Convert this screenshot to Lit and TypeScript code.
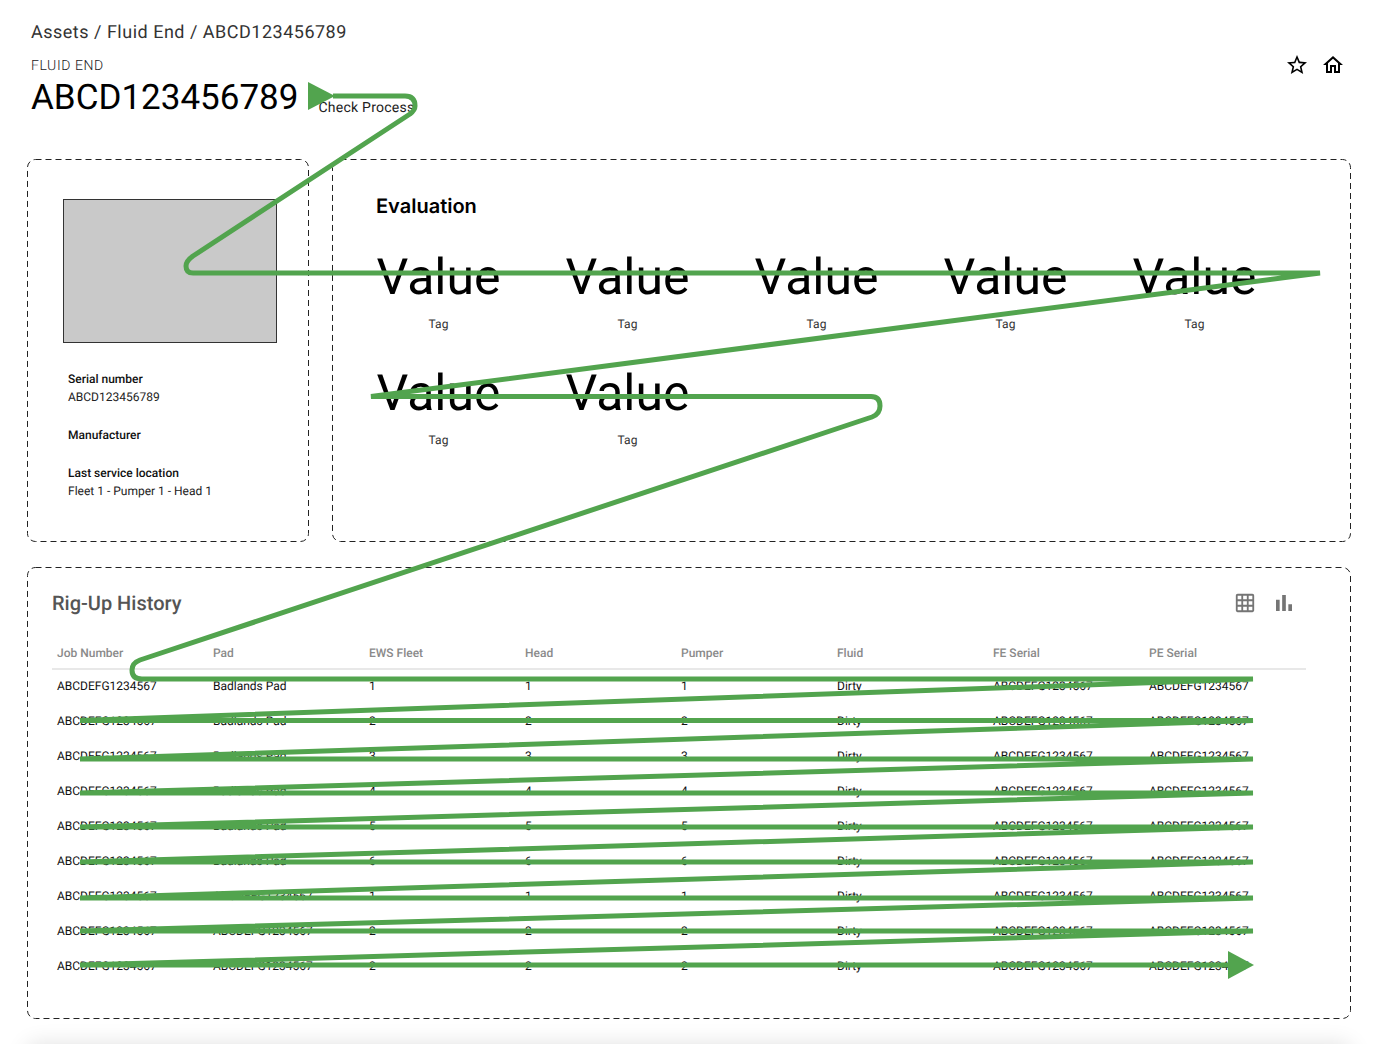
import { LitElement, html, css, svg } from 'lit';
import { customElement } from 'lit/decorators.js';

const COLUMNS = ['Job Number', 'Pad', 'EWS Fleet', 'Head', 'Pumper', 'Fluid', 'FE Serial', 'PE Serial'];
const SERIAL = 'ABCDEFG1234567';
const ROWS = [
  ['Badlands Pad', '1'],
  ['Badlands Pad', '2'],
  ['Badlands Pad', '3'],
  ['Badlands Pad', '4'],
  ['Badlands Pad', '5'],
  ['Badlands Pad', '6'],
  [SERIAL, '1'],
  [SERIAL, '2'],
  [SERIAL, '2'],
];

// the green annotation sweep that sits over the whole page
const ROW_TURNS = [720.5, 759, 793, 827, 862, 898, 931];
const SWEEP =
  'M333 96H405Q415 96 415 106Q415 110 410 114L193 256Q186 261 186 266Q186 273 193 273H1320L371 396.5H871Q880 396.5 880 406Q880 414 872 417L140 660Q132 663 132 670Q132 679 142 679H1253' +
  ROW_TURNS.map((y) => `L80 ${y}H1253`).join('') +
  'L80 965H1232';

const dashed = svg`<svg class="dash" aria-hidden="true"><rect rx="8" ry="8"></rect></svg>`;

@customElement('app-root')
export class AppRoot extends LitElement {
  static styles = css`
    :host {
      display: block;
      position: relative;
      box-sizing: border-box;
      width: 1388px;
      height: 1044px;
      overflow: hidden;
      padding: 22px 37px 0 27px;
      background: #fff;
      font-family: Roboto, 'Liberation Sans', sans-serif;
      text-rendering: geometricPrecision;
      color: #000;
    }
    .crumbs {
      margin-left: 4px;
      font-size: 18px;
      line-height: 22px;
      letter-spacing: 0.5px;
      color: #333;
    }
    .head {
      display: flex;
      justify-content: space-between;
      align-items: flex-start;
      margin-top: 12px;
      padding: 0 6px 0 4px;
    }
    .kind {
      font-size: 14px;
      line-height: 20px;
      font-weight: 300;
      letter-spacing: 0.6px;
      color: #222;
    }
    .title-row {
      display: flex;
      align-items: flex-end;
      gap: 20px;
    }
    h1 {
      margin: 0;
      font-size: 35px;
      line-height: 44px;
      font-weight: 400;
    }
    .check {
      margin-bottom: 2px;
      font-size: 14px;
      line-height: 20px;
      letter-spacing: 0.25px;
      color: #222;
    }
    .actions {
      display: flex;
      gap: 12px;
      margin-top: -3px;
    }
    .actions svg {
      display: block;
      width: 24px;
      height: 24px;
      fill: #000;
    }
    .top {
      display: flex;
      gap: 23px;
      height: 383px;
      margin-top: 39px;
    }
    .card {
      position: relative;
      box-sizing: border-box;
    }
    .dash {
      position: absolute;
      inset: 0;
      width: 100%;
      height: 100%;
      pointer-events: none;
    }
    .dash rect {
      x: 0.5px;
      y: 0.5px;
      width: calc(100% - 1px);
      height: calc(100% - 1px);
      fill: none;
      stroke: #222;
      stroke-width: 1;
      stroke-dasharray: 6 4;
    }
    .asset {
      width: 282px;
      flex: none;
      padding: 40px 0 0 36px;
    }
    .photo {
      box-sizing: border-box;
      width: 214px;
      height: 144px;
      margin-bottom: 27px;
      border: 1px solid #333;
      background: #c9c9c9;
    }
    .fact {
      margin: 0 0 20px 5px;
      font-size: 12px;
      line-height: 18px;
      color: #222;
    }
    .fact b {
      display: block;
      font-weight: 500;
      color: #111;
    }
    .evaluation {
      flex: 1;
      padding: 35px 44px 0;
    }
    h2 {
      margin: 0 0 32px;
      font-family: Inter, Roboto, sans-serif;
      font-size: 20px;
      line-height: 24px;
      font-weight: 600;
    }
    .stats {
      display: flex;
      flex-wrap: wrap;
      column-gap: 64px;
      row-gap: 33px;
    }
    .stat {
      width: 125px;
      text-align: center;
    }
    .value {
      font-size: 50px;
      line-height: 56px;
    }
    .tag {
      margin-top: 9px;
      font-size: 12px;
      line-height: 18px;
      color: #333;
    }
    .history {
      height: 452px;
      margin-top: 25px;
      padding: 24px 45px 0 25px;
    }
    .history-head {
      display: flex;
      justify-content: space-between;
      align-items: center;
      padding-right: 14px;
    }
    h3 {
      margin: 0;
      font-size: 20px;
      line-height: 24px;
      font-weight: 500;
      color: #555;
    }
    .views {
      display: flex;
      align-items: center;
      gap: 20px;
    }
    .views svg {
      display: block;
      fill: #757575;
    }
    .row {
      display: grid;
      grid-template-columns: repeat(8, 156px);
      padding-left: 5px;
      height: 35px;
      align-items: center;
      font-size: 12px;
      color: #111;
    }
    .row.labels {
      box-sizing: border-box;
      height: 34px;
      margin: 21px 0 -2px;
      padding-top: 2px;
      border-bottom: 2px solid #e8e8e8;
      font-weight: 500;
      color: #8a8a8a;
    }
    /* only the soft shadow of this sheet shows, the sheet itself is below the fold */
    .next-sheet {
      height: 40px;
      margin-top: 25px;
      border-radius: 8px;
      background: #f0f0f0;
      box-shadow: 0 0 22px rgba(0, 0, 0, 0.12);
    }
    .sweep {
      position: absolute;
      left: 0;
      top: 0;
      pointer-events: none;
    }
    .sweep path {
      fill: none;
      stroke: #52a44e;
      stroke-width: 5;
      stroke-linejoin: bevel;
    }
    .sweep polygon {
      fill: #52a44e;
    }
  `;

  render() {
    return html`
      <div class="crumbs">Assets / Fluid End / ABCD123456789</div>
      <div class="head">
        <div>
          <div class="kind">FLUID END</div>
          <div class="title-row">
            <h1>ABCD123456789</h1>
            <span class="check">Check Process</span>
          </div>
        </div>
        <div class="actions">
          <svg viewBox="0 0 24 24"><path d="M22 9.24l-7.19-.62L12 2 9.19 8.63 2 9.24l5.46 4.73L5.82 21 12 17.27 18.18 21l-1.63-7.03L22 9.24zM12 15.4l-3.76 2.27 1-4.28-3.32-2.88 4.38-.38L12 6.1l1.71 4.04 4.38.38-3.32 2.88 1 4.28L12 15.4z"></path></svg>
          <svg viewBox="0 0 24 24"><path d="M12 5.69l5 4.5V18h-2v-6H9v6H7v-7.81l5-4.5M12 3L2 12h3v8h6v-6h2v6h6v-8h3L12 3z"></path></svg>
        </div>
      </div>

      <div class="top">
        <section class="card asset">
          ${dashed}
          <div class="photo"></div>
          <div class="fact"><b>Serial number</b>ABCD123456789</div>
          <div class="fact"><b>Manufacturer</b></div>
          <div class="fact"><b>Last service location</b>Fleet 1 - Pumper 1 - Head 1</div>
        </section>
        <section class="card evaluation">
          ${dashed}
          <h2>Evaluation</h2>
          <div class="stats">
            ${[1, 2, 3, 4, 5, 6, 7].map(
              () => html`<div class="stat">
                <div class="value">Value</div>
                <div class="tag">Tag</div>
              </div>`
            )}
          </div>
        </section>
      </div>

      <section class="card history">
        ${dashed}
        <div class="history-head">
          <h3>Rig-Up History</h3>
          <div class="views">
            <svg width="22" height="22" viewBox="0 0 24 24"><path d="M20 2H4c-1.1 0-2 .9-2 2v16c0 1.1.9 2 2 2h16c1.1 0 2-.9 2-2V4c0-1.1-.9-2-2-2zM8 20H4v-4h4v4zm0-6H4v-4h4v4zm0-6H4V4h4v4zm6 12h-4v-4h4v4zm0-6h-4v-4h4v4zm0-6h-4V4h4v4zm6 12h-4v-4h4v4zm0-6h-4v-4h4v4zm0-6h-4V4h4v4z"></path></svg>
            <svg width="16" height="16" viewBox="5 5 14 14"><path d="M5 9.2h3.2V19H5zM10.4 5h3.2v14h-3.2zM15.8 13H19v6h-3.2z"></path></svg>
          </div>
        </div>
        <div class="row labels">${COLUMNS.map((c) => html`<span>${c}</span>`)}</div>
        ${ROWS.map(
          ([pad, n]) => html`<div class="row">
            <span>${SERIAL}</span><span>${pad}</span><span>${n}</span><span>${n}</span><span>${n}</span>
            <span>Dirty</span><span>${SERIAL}</span><span>${SERIAL}</span>
          </div>`
        )}
      </section>
      <div class="next-sheet"></div>

      <svg class="sweep" width="1388" height="1044" aria-hidden="true">
        <path d=${SWEEP}></path>
        <polygon points="308,82 308,110 335,96"></polygon>
        <polygon points="1228,951 1228,979 1254,965"></polygon>
      </svg>
    `;
  }
}
